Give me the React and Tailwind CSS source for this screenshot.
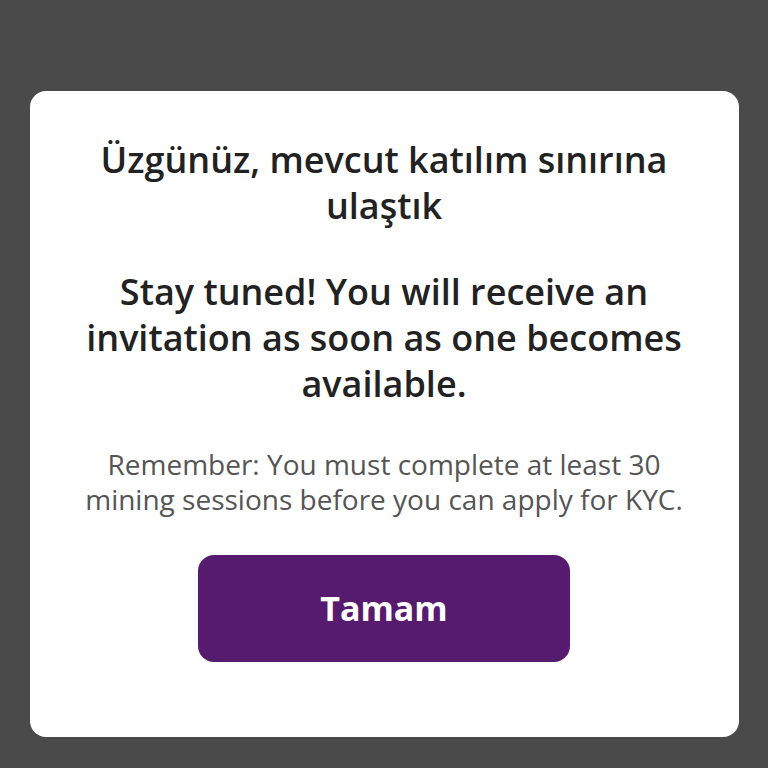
import React from 'react';

const App = () => {
  return (
    <div
      className="w-[768px] h-[768px] bg-[#4a4a4a] flex justify-center pt-[91px]"
      style={{ fontFamily: '"Open Sans", Lato, sans-serif' }}
    >
      <div className="w-[709px] h-[646px] bg-white rounded-[16px] flex flex-col items-center px-[42px] pt-[46px]">
        {/* Headline */}
        <h1 className="text-[36px] leading-[46px] font-semibold text-[#222222] text-center">
          Üzgünüz, mevcut katılım sınırına ulaştık
        </h1>
        <h2 className="mt-[40px] text-[36px] leading-[46px] font-semibold text-[#222222] text-center">
          Stay tuned! You will receive an invitation as soon as one becomes available.
        </h2>

        {/* Note */}
        <p className="mt-[40px] text-[28px] leading-[35px] text-[#555555] text-center">
          Remember: You must complete at least 30 mining sessions before you can apply for KYC.
        </p>

        <button className="mt-[38px] w-[372px] h-[107px] rounded-[16px] bg-[#561a6e] text-white text-[34px] font-bold">
          Tamam
        </button>
      </div>
    </div>
  );
};

export default App;
